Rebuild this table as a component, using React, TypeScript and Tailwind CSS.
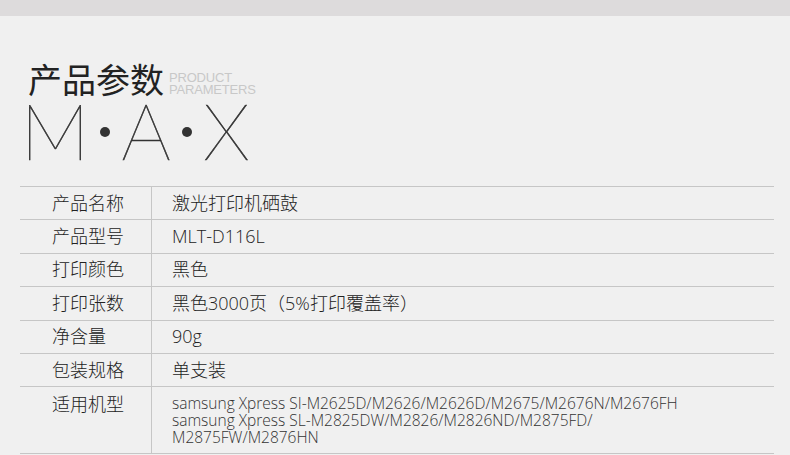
import React from 'react';

const rows = [
  { label: '产品名称', value: '激光打印机硒鼓' },
  { label: '产品型号', value: 'MLT-D116L' },
  { label: '打印颜色', value: '黑色' },
  { label: '打印张数', value: '黑色3000页（5%打印覆盖率）' },
  { label: '净含量', value: '90g' },
  { label: '包装规格', value: '单支装' },
];

const models = [
  'samsung Xpress SI-M2625D/M2626/M2626D/M2675/M2676N/M2676FH',
  'samsung Xpress SL-M2825DW/M2826/M2826ND/M2875FD/',
  'M2875FW/M2876HN',
];

export default function App() {
  return (
    <div className="w-[790px] h-[455px] overflow-hidden bg-[#f0f0f0] font-['Open_Sans','Noto_Sans_CJK_SC',sans-serif] text-[#333]">
      <div className="h-4 bg-[#dddbdc]" />

      {/* heading */}
      <div className="pl-7 pt-[43px]">
        <div className="flex items-end gap-[5px]">
          <h1 className="text-[34px] leading-[40px] font-normal text-[#222] font-['Noto_Sans_CJK_SC',sans-serif]">产品参数</h1>
          <div className="pb-[3px] text-[13px] leading-[12px] text-[#c8c8c8] font-['Liberation_Sans',sans-serif] tracking-[-0.2px]">
            <div>PRODUCT</div>
            <div>PARAMETERS</div>
          </div>
        </div>
        <div className="flex items-start h-[62px] font-['Lato',sans-serif] font-thin text-[78px] leading-[62px] text-[#333] [-webkit-text-stroke:0.6px_#333] overflow-hidden">
          <span className="w-[54px] flex justify-center">M</span>
          <span className="mt-[28px] ml-[18px] mr-[12px] w-[10px] h-[10px] rounded-full bg-[#333]" />
          <span className="w-[48px] flex justify-center">A</span>
          <span className="mt-[28px] ml-[12px] mr-[13px] w-[10px] h-[10px] rounded-full bg-[#333]" />
          <span className="w-[43px] flex justify-center">X</span>
        </div>
      </div>

      {/* table */}
      <div className="ml-5 mt-[25px] w-[754px] border-t border-[#c6c6c6] font-light">
        {rows.map((r) => (
          <div key={r.label} className="flex h-[33.4px] border-b border-[#c6c6c6] text-[18px]">
            <div className="w-[132px] pl-8 flex items-center border-r border-[#c6c6c6] text-[#222]">{r.label}</div>
            <div className="pl-5 flex items-center whitespace-pre text-[#222]">{r.value}</div>
          </div>
        ))}
        <div className="flex h-[67px] border-b border-[#c6c6c6]">
          <div className="w-[132px] pl-8 pt-[4px] border-r border-[#c6c6c6] text-[18px] leading-[26px] text-[#222]">
            适用机型
          </div>
          <div className="pl-5 pt-[8px] text-[15.5px] leading-[17px]">
            {models.map((m) => (
              <div key={m} className="whitespace-nowrap">{m}</div>
            ))}
          </div>
        </div>
      </div>
    </div>
  );
}
